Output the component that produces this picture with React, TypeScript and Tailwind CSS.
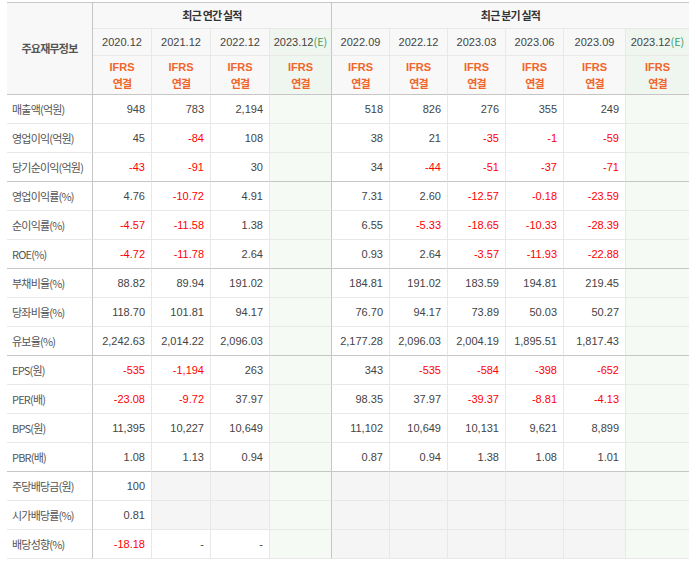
import clsx from "clsx";

type Row = {
  label: string;
  annual: (string | null)[];
  quarter: (string | null)[];
  groupEnd?: boolean;
  dividend?: boolean;
};

const rows: Row[] = [
  { label: "매출액(억원)", annual: ["948", "783", "2,194"], quarter: ["518", "826", "276", "355", "249"] },
  { label: "영업이익(억원)", annual: ["45", "-84", "108"], quarter: ["38", "21", "-35", "-1", "-59"] },
  { label: "당기순이익(억원)", annual: ["-43", "-91", "30"], quarter: ["34", "-44", "-51", "-37", "-71"], groupEnd: true },
  { label: "영업이익률(%)", annual: ["4.76", "-10.72", "4.91"], quarter: ["7.31", "2.60", "-12.57", "-0.18", "-23.59"] },
  { label: "순이익률(%)", annual: ["-4.57", "-11.58", "1.38"], quarter: ["6.55", "-5.33", "-18.65", "-10.33", "-28.39"] },
  { label: "ROE(%)", annual: ["-4.72", "-11.78", "2.64"], quarter: ["0.93", "2.64", "-3.57", "-11.93", "-22.88"], groupEnd: true },
  { label: "부채비율(%)", annual: ["88.82", "89.94", "191.02"], quarter: ["184.81", "191.02", "183.59", "194.81", "219.45"] },
  { label: "당좌비율(%)", annual: ["118.70", "101.81", "94.17"], quarter: ["76.70", "94.17", "73.89", "50.03", "50.27"] },
  { label: "유보율(%)", annual: ["2,242.63", "2,014.22", "2,096.03"], quarter: ["2,177.28", "2,096.03", "2,004.19", "1,895.51", "1,817.43"], groupEnd: true },
  { label: "EPS(원)", annual: ["-535", "-1,194", "263"], quarter: ["343", "-535", "-584", "-398", "-652"] },
  { label: "PER(배)", annual: ["-23.08", "-9.72", "37.97"], quarter: ["98.35", "37.97", "-39.37", "-8.81", "-4.13"] },
  { label: "BPS(원)", annual: ["11,395", "10,227", "10,649"], quarter: ["11,102", "10,649", "10,131", "9,621", "8,899"] },
  { label: "PBR(배)", annual: ["1.08", "1.13", "0.94"], quarter: ["0.87", "0.94", "1.38", "1.08", "1.01"], groupEnd: true },
  { label: "주당배당금(원)", annual: ["100", null, null], quarter: [null, null, null, null, null], dividend: true },
  { label: "시가배당률(%)", annual: ["0.81", null, null], quarter: [null, null, null, null, null], dividend: true },
  { label: "배당성향(%)", annual: ["-18.18", "-", "-"], quarter: [null, null, null, null, null], dividend: true },
];

const annualYears = ["2020.12", "2021.12", "2022.12"];
const quarterYears = ["2022.09", "2022.12", "2023.03", "2023.06", "2023.09"];

const kr = "font-['Noto_Sans_CJK_KR',sans-serif] tracking-[-0.8px]";

const Ifrs = () => (
  <div className="flex flex-col items-center leading-[16px] font-bold text-[#f0662a] text-[11px]">
    <span className="font-['Liberation_Sans',sans-serif]">IFRS</span>
    <span className={kr}>연결</span>
  </div>
);

const Estimate = () => (
  <span>
    2023.12<span className={clsx(kr, "text-[#3f9e5e] tracking-normal")}>(E)</span>
  </span>
);

const App = () => {
  const rowBorder = (r: Row) => (r.groupEnd ? "border-b border-b-[#c6c6c6]" : "border-b border-b-[#e8e8e8]");

  const valueCell = (v: string | null, r: Row, key: string, extra?: string) => (
    <div
      key={key}
      className={clsx(
        "flex items-center justify-end pr-[6px] border-r border-r-[#e8e8e8]",
        rowBorder(r),
        v === null && r.dividend ? "bg-[#f5f5f5]" : "bg-white",
        v && v.startsWith("-") && v.length > 1 ? "text-[#ff0000]" : "text-[#444]",
        extra,
      )}
    >
      {v}
    </div>
  );

  return (
    <div className="w-[697px] h-[565px] bg-white font-['Liberation_Sans','Noto_Sans_CJK_KR',sans-serif] text-[11px] text-[#444]">
      <div className="ml-[7px] mt-[2px] w-[682px] border-t border-t-[#c8c8c8] grid grid-cols-[86px_59px_59px_59px_62px_58px_58px_58px_58px_62px_63px] grid-rows-[26px_27px_39px_repeat(16,29px)]">
        {/* header */}
        <div className={clsx(kr, "row-span-3 flex items-center justify-center bg-[#f8f8f8] border-r border-r-[#c6c6c6] border-b border-b-[#c6c6c6] font-bold text-[#555]")}>
          주요재무정보
        </div>
        <div className={clsx(kr, "col-span-4 flex items-center justify-center bg-[#f8f8f8] border-r border-r-[#c6c6c6] border-b border-b-[#e8e8e8] font-bold text-[#333]")}>
          최근 연간 실적
        </div>
        <div className={clsx(kr, "col-span-6 flex items-center justify-center bg-[#f8f8f8] border-b border-b-[#e8e8e8] font-bold text-[#333]")}>
          최근 분기 실적
        </div>

        {annualYears.map((y) => (
          <div key={y} className="flex items-center justify-center bg-[#f8f8f8] border-r border-r-[#e8e8e8] border-b border-b-[#e8e8e8] text-[#444]">
            {y}
          </div>
        ))}
        <div className="flex items-center justify-center bg-[#eff6f0] border-r border-r-[#c6c6c6] border-b border-b-[#e8e8e8] text-[#444]">
          <Estimate />
        </div>
        {quarterYears.map((y) => (
          <div key={"q" + y} className="flex items-center justify-center bg-[#f8f8f8] border-r border-r-[#e8e8e8] border-b border-b-[#e8e8e8] text-[#444]">
            {y}
          </div>
        ))}
        <div className="flex items-center justify-center bg-[#eff6f0] border-b border-b-[#e8e8e8] text-[#444]">
          <Estimate />
        </div>

        {[0, 1, 2].map((i) => (
          <div key={"ai" + i} className="flex items-center justify-center bg-[#f8f8f8] border-r border-r-[#e8e8e8] border-b border-b-[#c6c6c6]">
            <Ifrs />
          </div>
        ))}
        <div className="flex items-center justify-center bg-[#eff6f0] border-r border-r-[#c6c6c6] border-b border-b-[#c6c6c6]">
          <Ifrs />
        </div>
        {[0, 1, 2, 3, 4].map((i) => (
          <div key={"qi" + i} className="flex items-center justify-center bg-[#f8f8f8] border-r border-r-[#e8e8e8] border-b border-b-[#c6c6c6]">
            <Ifrs />
          </div>
        ))}
        <div className="flex items-center justify-center bg-[#eff6f0] border-b border-b-[#c6c6c6]">
          <Ifrs />
        </div>

        {/* body */}
        {rows.map((r) => (
          <div key={r.label} className="contents">
            <div className={clsx(kr, "flex items-center pl-[5px] bg-white border-r border-r-[#c6c6c6] text-[#555]", rowBorder(r))}>
              {r.label}
            </div>
            {r.annual.map((v, i) => valueCell(v, r, r.label + "a" + i))}
            <div className={clsx("bg-[#f5faf5] border-r border-r-[#c6c6c6]", rowBorder(r))} />
            {r.quarter.map((v, i) => valueCell(v, r, r.label + "q" + i))}
            <div className={clsx("bg-[#f5faf5]", rowBorder(r))} />
          </div>
        ))}
      </div>
    </div>
  );
};

export default App;
